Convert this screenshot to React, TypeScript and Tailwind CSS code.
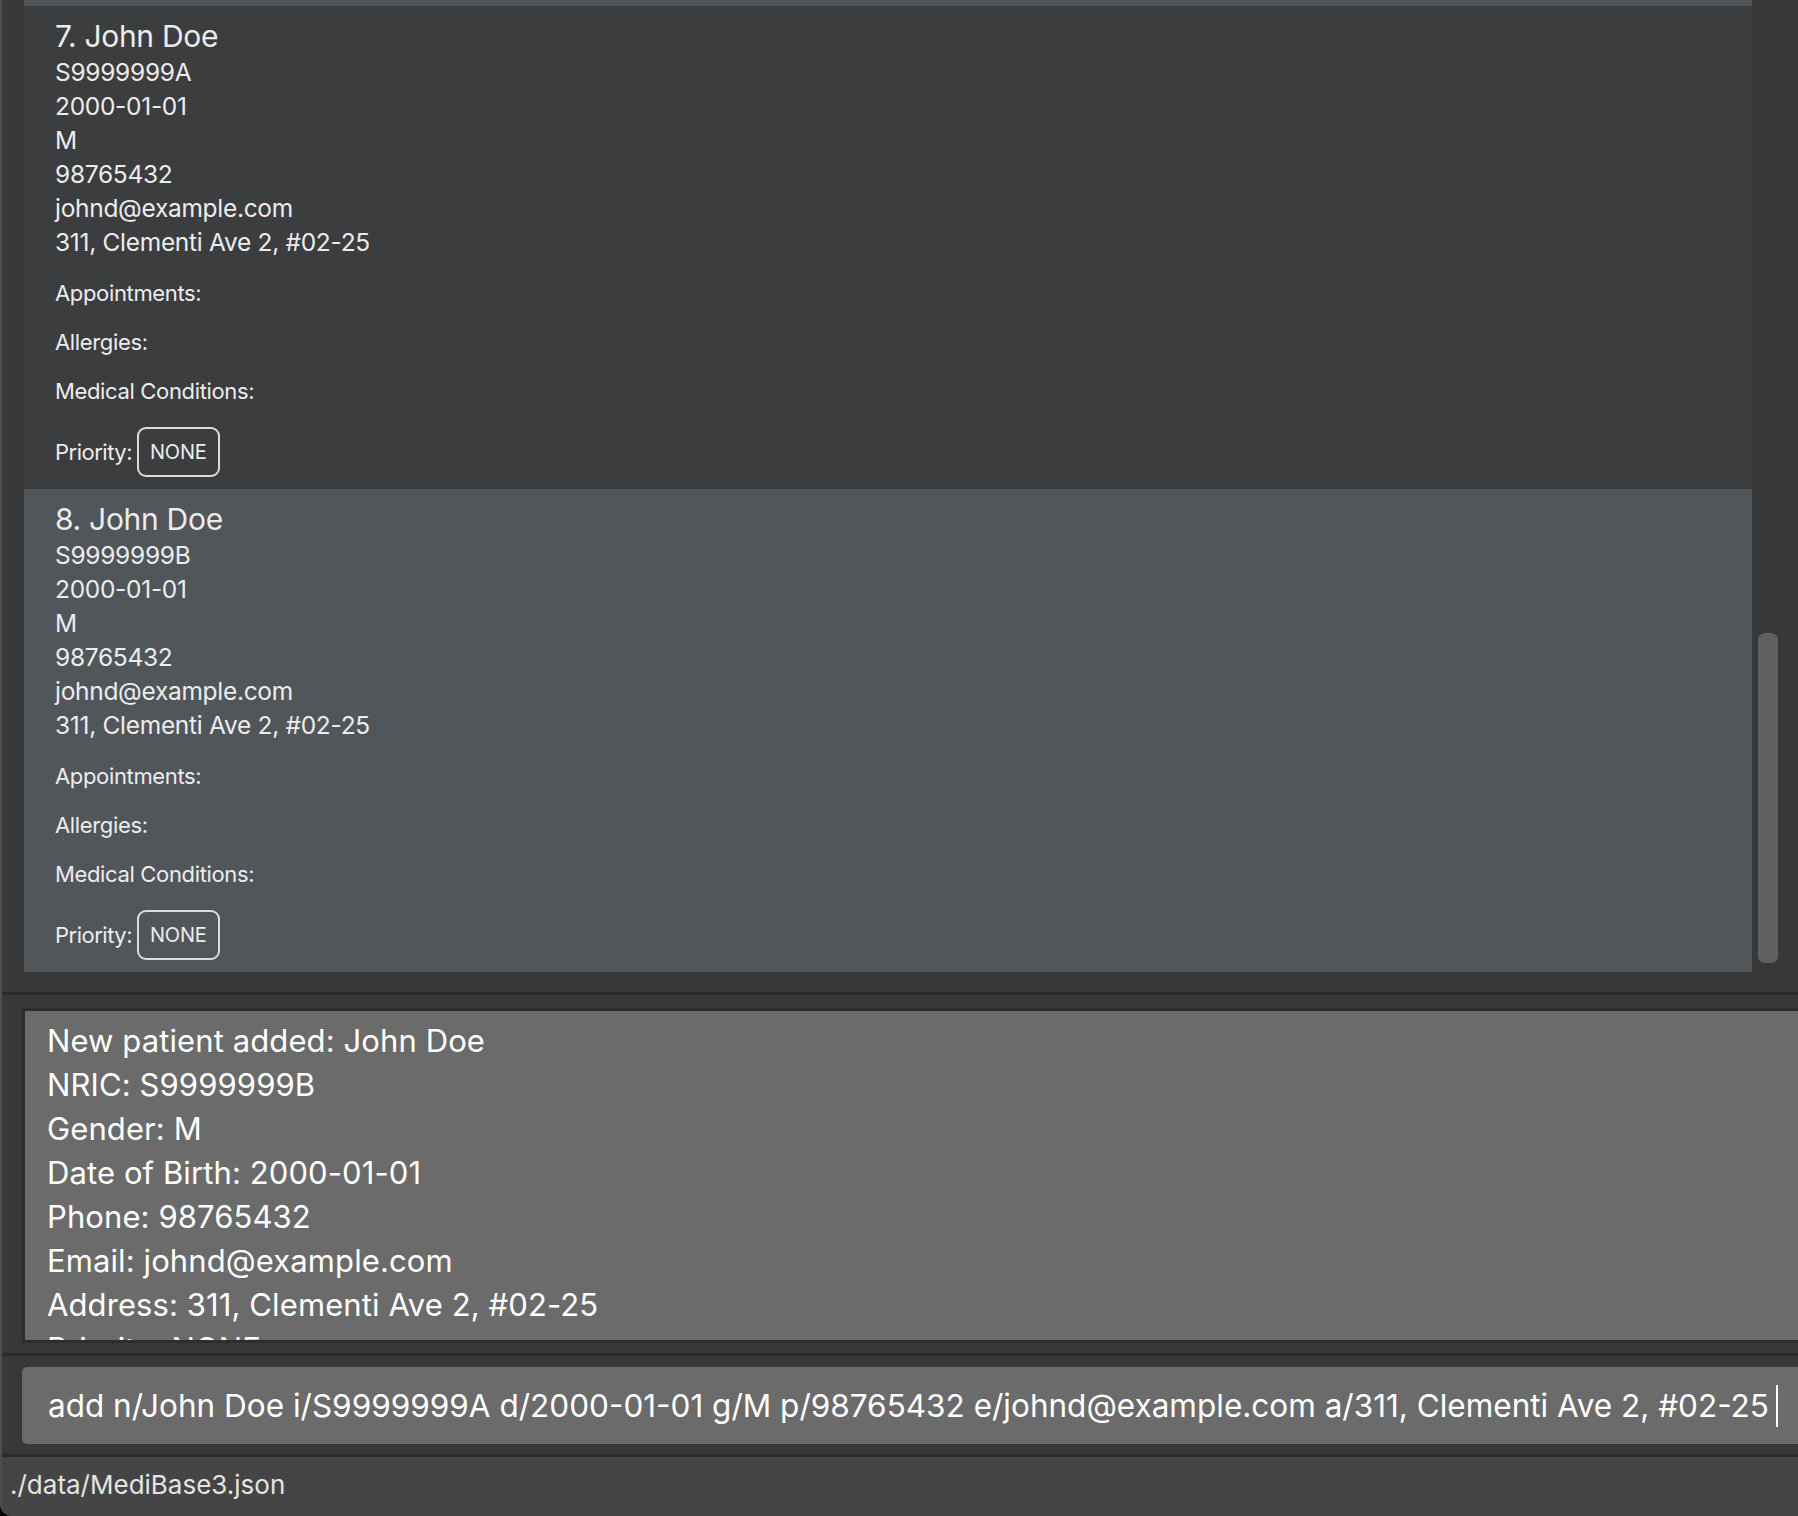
import React from 'react';

type Patient = {
  index: number;
  name: string;
  nric: string;
  dob: string;
  gender: string;
  phone: string;
  email: string;
  address: string;
  priority: string;
};

const patients: Patient[] = [
  {
    index: 7,
    name: 'John Doe',
    nric: 'S9999999A',
    dob: '2000-01-01',
    gender: 'M',
    phone: '98765432',
    email: 'johnd@example.com',
    address: '311, Clementi Ave 2, #02-25',
    priority: 'NONE',
  },
  {
    index: 8,
    name: 'John Doe',
    nric: 'S9999999B',
    dob: '2000-01-01',
    gender: 'M',
    phone: '98765432',
    email: 'johnd@example.com',
    address: '311, Clementi Ave 2, #02-25',
    priority: 'NONE',
  },
];

const resultLines = [
  'New patient added: John Doe',
  'NRIC: S9999999B',
  'Gender: M',
  'Date of Birth: 2000-01-01',
  'Phone: 98765432',
  'Email: johnd@example.com',
  'Address: 311, Clementi Ave 2, #02-25',
  'Priority: NONE',
];

const PatientCard: React.FC<{ patient: Patient; odd: boolean }> = ({ patient, odd }) => {
  return (
    <div
      className={`flex flex-col h-[483px] pl-[31px] pt-[11px] text-[#ececec] ${
        odd ? 'bg-[#51565a]' : 'bg-[#3c3d3f]'
      }`}
    >
      <div className="text-[30px] leading-[38px] tracking-[-0.3px]">
        {patient.index}. {patient.name}
      </div>
      <div className="flex flex-col text-[24.5px] leading-[34px] tracking-[-0.3px]">
        <span>{patient.nric}</span>
        <span>{patient.dob}</span>
        <span>{patient.gender}</span>
        <span>{patient.phone}</span>
        <span>{patient.email}</span>
        <span>{patient.address}</span>
      </div>
      <div className="mt-[20px] text-[22px] leading-[28px] tracking-[-0.35px]">Appointments:</div>
      <div className="mt-[21px] text-[22px] leading-[28px] tracking-[-0.35px]">Allergies:</div>
      <div className="mt-[21px] text-[22px] leading-[28px] tracking-[-0.35px]">Medical Conditions:</div>
      {/* Priority */}
      <div className="mt-[22px] flex items-center text-[22px] tracking-[-0.5px]">
        <span>Priority:</span>
        <span className="ml-[5px] h-[50px] px-[11px] flex items-center rounded-[9px] border-2 border-[#dcdcdc] text-[20px] tracking-[-0.2px]">
          {patient.priority}
        </span>
      </div>
    </div>
  );
};

export default function App() {
  return (
    <div className="w-[1798px] h-[1516px] bg-black">
      <div
        className="w-[1798px] h-[1516px] overflow-hidden flex flex-col bg-[#383838] border-l-2 border-[#4e4e4e] rounded-bl-[12px]"
        style={{ fontFamily: 'Inter, "Noto Sans", sans-serif' }}
      >
        {/* Patient list */}
        <div className="h-[992px] flex pl-[22px] shrink-0">
          <div className="w-[1728px] flex flex-col">
            <div className="h-[6px] bg-[#51565a]" />
            {patients.map((p, i) => (
              <PatientCard key={p.index} patient={p} odd={i % 2 === 1} />
            ))}
          </div>
          <div className="ml-[6px] w-[20px] flex flex-col pt-[633px]">
            <div className="h-[330px] rounded-[7px] bg-[#606060]" />
          </div>
        </div>

        <div className="h-[3px] bg-[#2a2a2a] shrink-0" />

        {/* Result display */}
        <div className="pt-[13px] pb-[10px] pl-[20px] shrink-0">
          <div className="w-[1800px] h-[335px] border-[3px] border-[#2d2d2d] bg-[#6b6b6b] overflow-hidden pl-[22px] pt-[8px] text-white text-[31px] leading-[44px] tracking-[0.1px]">
            {resultLines.map((line) => (
              <div key={line} className="whitespace-nowrap">{line}</div>
            ))}
          </div>
        </div>

        <div className="h-[3px] bg-[#2a2a2a] shrink-0" />

        {/* Command box */}
        <div className="pt-[11px] pb-[10px] pl-[20px] shrink-0">
          <div className="w-[1800px] h-[77px] rounded-[5px] bg-[#6b6b6b] flex items-center pl-[26px] text-white text-[31.5px]">
            <span className="whitespace-nowrap">
              add n/John Doe i/S9999999A d/2000-01-01 g/M p/98765432 e/johnd@example.com a/311, Clementi Ave 2, #02-25
            </span>
            <span className="ml-[7px] w-[2px] h-[42px] shrink-0 bg-white" />
          </div>
        </div>

        <div className="h-[3px] bg-[#2a2a2a] shrink-0" />

        {/* Status bar */}
        <div className="flex-1 bg-[#454545] flex items-center pl-[8px] pb-[4px] text-[#e4e4e4] text-[26px]">
          ./data/MediBase3.json
        </div>
      </div>
    </div>
  );
}
